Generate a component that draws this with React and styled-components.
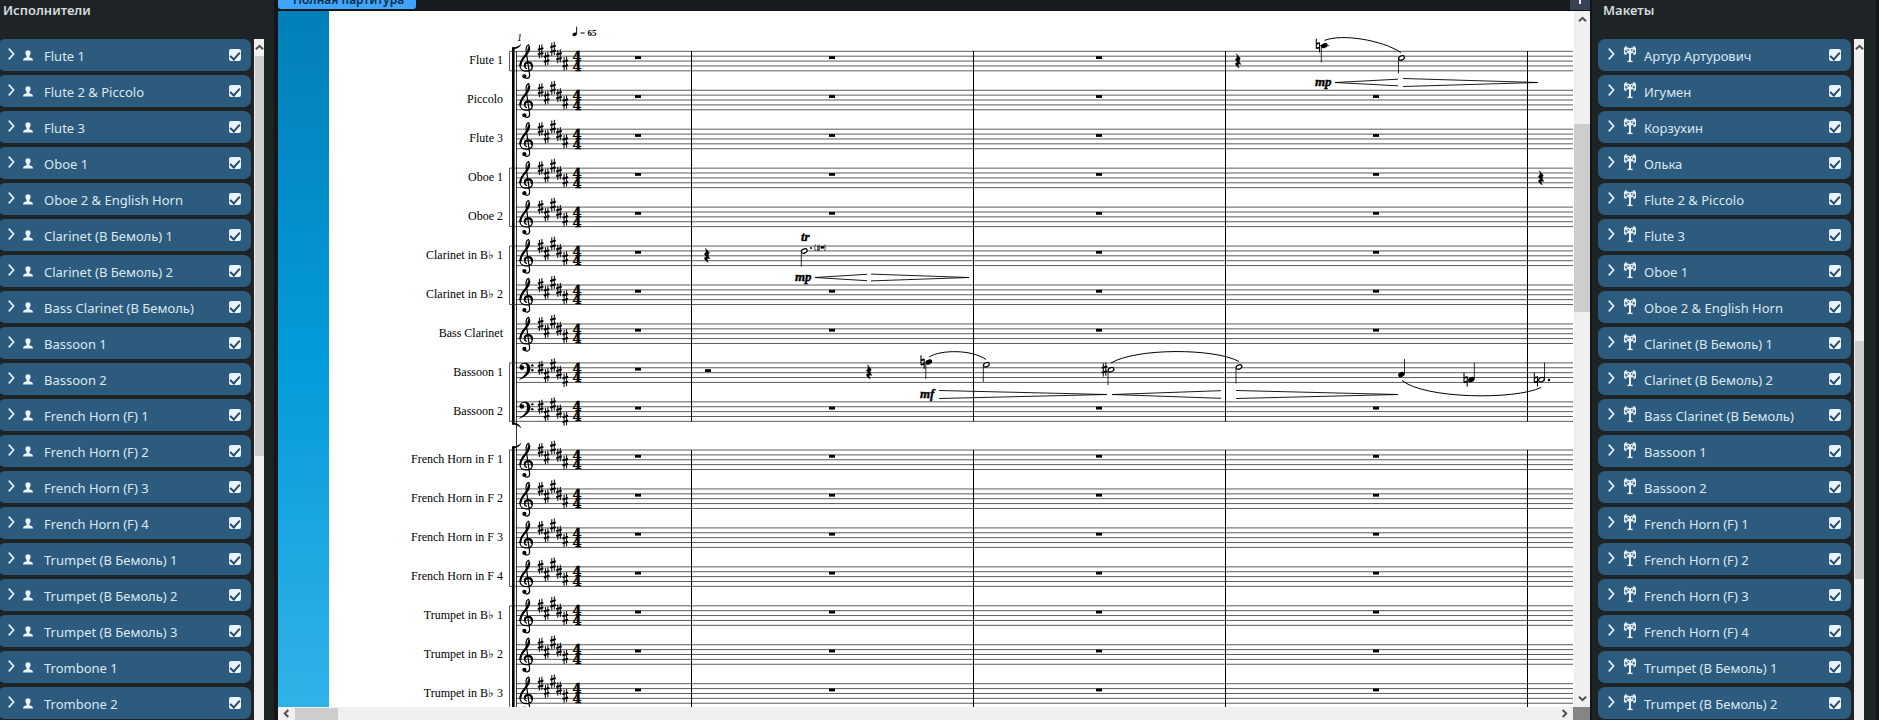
import React from 'react';
import styled, { createGlobalStyle } from 'styled-components';

const UI_FONT = '"Noto Sans", "Open Sans", sans-serif';
const SCORE_FONT = '"Liberation Serif", serif';

const Global = createGlobalStyle`
  * { box-sizing: border-box; }
  html, body { margin: 0; background: #1d2226; overflow: hidden; }
  body { font-family: ${UI_FONT}; font-size: 13px; }
`;

const Shell = styled.div`
  display: grid;
  grid-template-columns: 278px minmax(0, 1fr) 289px;
  height: 100vh;
  overflow: hidden;
`;

const Panel = styled.aside`
  display: flex;
  flex-direction: column;
  min-height: 0;
  height: 100vh;
  background: #1e2326;
  border-right: ${(p) => (p.$side === 'left' ? 4 : 3)}px solid #12161a;
  border-left: ${(p) => (p.$side === 'left' ? 0 : 2)}px solid #12161a;
`;

const PanelTitle = styled.h2`
  margin: 0;
  flex: none;
  height: 39px;
  padding-left: ${(p) => (p.$side === 'left' ? 3 : 11)}px;
  font-size: 13px;
  line-height: 20px;
  font-weight: 600;
  color: #d5dade;
`;

const PanelBody = styled.div`
  display: flex;
  flex: 1;
  min-height: 0;
  gap: 3px;
  padding-left: ${(p) => (p.$side === 'left' ? 0 : 6)}px;
`;

const List = styled.ul`
  list-style: none;
  margin: 0 0 0 ${(p) => (p.$side === 'left' ? -2 : 0)}px;
  padding: 0;
  width: 253px;
  display: flex;
  flex-direction: column;
  gap: 4px;
  overflow: hidden;
`;

const Row = styled.li`
  display: flex;
  align-items: center;
  flex: none;
  height: 32px;
  padding: 0 10px;
  border-radius: 7px;
  background: #2c5b7e;
`;

const Expander = styled.button`
  display: flex;
  padding: 0;
  border: 0;
  background: none;
  width: 15px;
  height: 14px;
`;

const IconBox = styled.span`
  display: flex;
  width: 21px;
  height: 18px;
  align-items: center;
`;

const RowLabel = styled.label`
  flex: 1;
  padding-top: 2px;
  line-height: 20px;
  color: #dbe7f0;
  white-space: nowrap;
`;

const Check = styled.input`
  appearance: none;
  display: flex;
  justify-content: center;
  margin: 0;
  width: 12px;
  height: 12px;
  border-radius: 2px;
  background: #eaf3fa;
  &:checked::after {
    content: '';
    width: 4px;
    height: 8px;
    margin-top: 1px;
    border: solid #234b69;
    border-width: 0 2px 2px 0;
    transform: rotate(42deg);
  }
`;

const Track = styled.div`
  display: flex;
  flex-direction: column;
  align-items: center;
  width: 10px;
  overflow: hidden;
  background: #f0f0f0;
`;

const TrackArrow = styled.span`
  display: flex;
  flex: none;
  align-items: center;
  justify-content: center;
  width: ${(p) => p.$w}px;
  height: ${(p) => p.$h}px;
`;

const PanelThumb = styled.div`
  flex: none;
  align-self: flex-end;
  width: 9px;
  margin-top: ${(p) => p.$offset}px;
  height: ${(p) => p.$length}px;
  background: #cdcdcd;
`;

const Center = styled.main`
  display: flex;
  flex-direction: column;
  min-width: 0;
  height: 100vh;
`;

const TabBar = styled.div`
  display: flex;
  flex: none;
  align-items: flex-end;
  justify-content: space-between;
  height: 11px;
  overflow: hidden;
  background: #171c20;
  border-bottom: 1px solid #0e1014;
`;

const Tab = styled.button`
  height: 24px;
  margin-bottom: 1px;
  padding: 5px 12px 0 15px;
  border: 0;
  border-radius: 3px;
  background: #3fa5fb;
  color: #0d2c48;
  font: 600 12px/18px ${UI_FONT};
  white-space: nowrap;
`;

const AddTab = styled.button`
  display: flex;
  align-items: flex-end;
  justify-content: center;
  width: 20px;
  height: 20px;
  padding: 0 0 6px;
  border: 0;
  background: #3a4354;
`;

const Viewport = styled.div`
  display: flex;
  flex: 1;
  min-height: 0;
`;

const Desk = styled.div`
  width: 51px;
  background: linear-gradient(#027fb8, #049bdb 50%, #30b2e7);
`;

const Paper = styled.div`
  display: flex;
  flex: 1;
  min-width: 0;
  overflow: hidden;
  background: #fff;
`;

const StaffNames = styled.div`
  flex: none;
  width: 174px;
  padding-top: 30px;
  display: flex;
  flex-direction: column;
  gap: 9px;
`;

const StaffFamily = styled.div`
  text-align: right;
  font: 12px/39px ${SCORE_FONT};
  color: #000;
`;

const StaffName = styled.div`
  height: 39px;
  white-space: nowrap;
`;

const ScoreSvg = styled.svg`
  flex: 1;
  min-width: 0;
  height: 100%;
  margin-left: 5px;
  overflow: hidden;
`;

const VScroll = styled.div`
  display: flex;
  flex-direction: column;
  flex: none;
  width: 17px;
  background: #f0f0f0;
  border-left: 1px solid #fff;
`;

const VThumb = styled.div`
  margin-top: 96px;
  height: 188px;
  background: #cdcdcd;
`;

const Spacer = styled.div`
  flex: 1;
`;

const HScroll = styled.div`
  display: flex;
  flex: none;
  height: 13px;
  background: #f0f0f0;
`;

const HThumb = styled.div`
  width: 43px;
  margin-top: 1px;
  background: #cdcdcd;
`;

const Corner = styled.div`
  width: 17px;
  background: #858585;
`;

const players = [
  'Flute 1', 'Flute 2 & Piccolo', 'Flute 3', 'Oboe 1', 'Oboe 2 & English Horn',
  'Clarinet (В Бемоль) 1', 'Clarinet (В Бемоль) 2', 'Bass Clarinet (В Бемоль)',
  'Bassoon 1', 'Bassoon 2', 'French Horn (F) 1', 'French Horn (F) 2',
  'French Horn (F) 3', 'French Horn (F) 4', 'Trumpet (В Бемоль) 1',
  'Trumpet (В Бемоль) 2', 'Trumpet (В Бемоль) 3', 'Trombone 1', 'Trombone 2',
];

const layouts = [
  'Артур Артурович', 'Игумен', 'Корзухин', 'Олька', 'Flute 2 & Piccolo', 'Flute 3',
  'Oboe 1', 'Oboe 2 & English Horn', 'Clarinet (В Бемоль) 1', 'Clarinet (В Бемоль) 2',
  'Bass Clarinet (В Бемоль)', 'Bassoon 1', 'Bassoon 2', 'French Horn (F) 1',
  'French Horn (F) 2', 'French Horn (F) 3', 'French Horn (F) 4',
  'Trumpet (В Бемоль) 1', 'Trumpet (В Бемоль) 2',
];

const woodwinds = [
  'Flute 1', 'Piccolo', 'Flute 3', 'Oboe 1', 'Oboe 2', 'Clarinet in B♭ 1',
  'Clarinet in B♭ 2', 'Bass Clarinet', 'Bassoon 1', 'Bassoon 2',
];

const brass = [
  'French Horn in F 1', 'French Horn in F 2', 'French Horn in F 3', 'French Horn in F 4',
  'Trumpet in B♭ 1', 'Trumpet in B♭ 2', 'Trumpet in B♭ 3',
];

const ChevronRight = () => (
  <svg width="7" height="12" viewBox="0 0 7 12" fill="none" stroke="#e6f0f7" strokeWidth="1.7">
    <path d="M0.7 0.7 L5.6 6 L0.7 11.3" />
  </svg>
);

const PersonIcon = () => (
  <svg width="10" height="11" viewBox="0 0 10 11" fill="#e9f2f9">
    <path d="M5 0.2 C6.8 0.2 7.7 1.4 7.6 3 C7.5 4.6 6.8 5.4 6.4 6 L6.4 7.2 C8.6 7.8 10 8.2 10 10.6 L0 10.6 C0 8.2 1.4 7.8 3.6 7.2 L3.6 6 C3.2 5.4 2.5 4.6 2.4 3 C2.3 1.4 3.2 0.2 5 0.2Z" />
  </svg>
);

const StandIcon = () => (
  <svg width="13" height="18" viewBox="-1 0 13 18" fill="none" stroke="#e4eff7" strokeWidth="1.3">
    <path d="M2.6 0.2 L0.6 2.2 V7.6 L2.4 8.6 M9.4 0.2 L11.4 2.2 V7.6 L9.6 8.6 M0.8 3.4 C2.5 2 4.5 2 6 3.2 C7.5 2 9.5 2 11.2 3.4 M0.8 7.6 C3 6.2 4.8 6.4 6 7.6 C7.2 6.4 9 6.2 11.2 7.6 M2.2 3.2 L6 7.2 L9.8 3.2" />
    <path d="M6 3 V15.4" strokeWidth="2" />
    <path d="M3.4 15.4 H8.6" strokeWidth="1.4" />
  </svg>
);

const turns = { up: 0, right: 90, down: 180, left: 270 };
const ArrowGlyph = ({ dir }) => (
  <svg width="9" height="9" viewBox="-4.5 -4.5 9 9" fill="none" stroke="#505050" strokeWidth="2">
    <path d="M-3.5 1.8 L0 -1.7 L3.5 1.8" transform={`rotate(${turns[dir]})`} />
  </svg>
);

function SidePanel({ side, title, items, icon: Icon, offset, length }) {
  return (
    <Panel $side={side}>
      <PanelTitle $side={side}>{title}</PanelTitle>
      <PanelBody $side={side}>
        <List $side={side}>
          {items.map((name, i) => (
            <Row key={name}>
              <Expander type="button" aria-label={`Expand ${name}`}><ChevronRight /></Expander>
              <IconBox><Icon /></IconBox>
              <RowLabel htmlFor={`${side}-${i}`}>{name}</RowLabel>
              <Check type="checkbox" id={`${side}-${i}`} defaultChecked />
            </Row>
          ))}
        </List>
        <Track>
          <TrackArrow $w={10} $h={17}><ArrowGlyph dir="up" /></TrackArrow>
          <PanelThumb $offset={offset} $length={length} />
        </Track>
      </PanelBody>
    </Panel>
  );
}

/* Score geometry */
const SPACE = 4.88;
const staffTop = (i) => (i < 10 ? 51.3 + 38.95 * i : 450 + 38.95 * (i - 10));
const isBass = (i) => i === 8 || i === 9;
const BARLINES = [691.5, 973.5, 1225.5, 1527.5];
const REST_X = [638, 832, 1099, 1376];
const SHARPS = [[540.6, 0], [546.6, 7.3], [553, -2.4], [559, 4.9], [565.3, 12.2]];
const skipsRest = (staff, bar) =>
  (staff === 0 && bar === 3) || (staff === 5 && bar === 1) || (staff === 8 && bar > 0);

const TrebleClef = ({ x, y }) => (
  <g transform={`translate(${x} ${y})`} fill="none" stroke="#000" strokeLinecap="round">
    <path strokeWidth="1.2" d="M5 24.8 C6 28.3 11 28 10.6 23.2 L7.3 1 C6.7 -3 7.8 -6 9.6 -6.6 C11.2 -4 10.6 0 7.5 3.5 C4 7.5 1 10 1 14.5 C1 18 4 19.9 7.5 19.9 C11 19.9 13.4 18 13.4 15 C13.4 12 11.5 10.8 9.5 10.8 C7 10.8 5.4 12.5 5.4 14.3 C5.4 16 6.5 17 7.6 17.3" />
    <path strokeWidth="2.1" d="M9.9 -3.6 C9.8 -1 8.8 1.4 6.6 4 C3.6 7.4 1.6 10.2 1.5 14" />
    <path strokeWidth="2" d="M5.8 14.6 C5.8 12.6 7.4 11.3 9.5 11.3 C11.4 11.3 12.8 12.8 12.8 15" />
    <circle cx="5.4" cy="25" r="2.1" fill="#000" stroke="none" />
  </g>
);

const BassClef = ({ x, y }) => (
  <g transform={`translate(${x} ${y})`}>
    <path d="M0.6 4.6 C0.6 1 3.6 -0.2 6 -0.2 C9.6 -0.2 11.4 2.4 11.4 5.5 C11.4 10.8 6 14.8 0.4 16.8 L0.2 16.3 C5.2 13.2 8 10.2 8 5.4 C8 2 7 0.8 5.2 0.8 C3.4 0.8 2 1.8 1.8 3.2 Z" />
    <circle cx="2.9" cy="4.7" r="2.3" />
    <circle cx="13.3" cy="2.5" r="1.2" />
    <circle cx="13.3" cy="7.4" r="1.2" />
  </g>
);

const Sharp = ({ x, y, s = 1 }) => (
  <g transform={`translate(${x} ${y}) scale(${s})`} stroke="#000" fill="none">
    <path strokeWidth="1" d="M-1.2 -6.3 V7 M1.3 -7 V6.3" />
    <path strokeWidth="1.9" d="M-2.8 -1.6 L2.8 -3.2 M-2.8 3.2 L2.8 1.6" />
  </g>
);

const Natural = ({ x, y }) => (
  <g transform={`translate(${x} ${y})`} stroke="#000" fill="none">
    <path strokeWidth="1.1" d="M-1.5 -6.8 V3 M1.7 -3 V6.8" />
    <path strokeWidth="1.8" d="M-1.5 -1.7 L1.7 -2.6 M-1.5 2.8 L1.7 1.9" />
  </g>
);

const QuarterRest = ({ x, y }) => (
  <path
    transform={`translate(${x} ${y})`}
    stroke="#000"
    strokeWidth="0.5"
    d="M-1.6 -7.2 L2.3 -2.6 C0.7 -0.6 0.9 1 3 3.4 C0.2 2.4 -0.6 3.8 1.2 6.8 C-3.4 4.6 -3.4 0.9 -0.2 1.6 L-2.7 -1.4 C-0.5 -3.2 -0.5 -5 -1.6 -7.2Z"
  />
);

const Note = ({ x, y, half, stem, ledger }) => (
  <g>
    {ledger && <path d={`M${x - 5} ${y} H${x + 5}`} stroke="#000" strokeWidth="0.8" />}
    <ellipse
      cx={x} cy={y} rx={half ? 3 : 3.5} ry={half ? 2 : 2.4}
      transform={`rotate(-24 ${x} ${y})`}
      fill={half ? '#fff' : '#000'} stroke={half ? '#000' : 'none'} strokeWidth="1.2"
    />
    <path
      d={stem > 0 ? `M${x - 3} ${y + 1} V${y + stem}` : `M${x + 3} ${y - 1} V${y + stem}`}
      stroke="#000" strokeWidth="0.8"
    />
  </g>
);

const Hairpin = ({ from, to, y, open = 3.8, closed = 0 }) => (
  <path
    d={`M${from} ${y - closed} L${to} ${y - open} M${from} ${y + closed} L${to} ${y + open}`}
    stroke="#000" strokeWidth="0.9" fill="none"
  />
);

const Slur = ({ d }) => <path d={d} stroke="#000" strokeWidth="1" fill="none" />;

const Dynamic = ({ x, y, children }) => (
  <text x={x} y={y} fontFamily={SCORE_FONT} fontSize="13" fontWeight="700" fontStyle="italic" stroke="#000" strokeWidth="0.4">{children}</text>
);

const Staff = ({ index }) => {
  const y = staffTop(index);
  const bass = isBass(index);
  return (
    <g>
      {[0, 1, 2, 3, 4].map((n) => (
        <path key={n} d={`M516 ${y + n * SPACE} H4000`} stroke="#333" strokeWidth="0.8" />
      ))}
      {bass ? <BassClef x={519} y={y} /> : <TrebleClef x={519} y={y} />}
      {SHARPS.map(([x, dy]) => <Sharp key={x} x={x} y={y + dy + (bass ? SPACE : 0)} />)}
      <text
        textAnchor="middle" fontFamily='"DejaVu Serif", serif' fontWeight="700" fontSize="13"
        stroke="#000" strokeWidth="0.4"
      >
        <tspan x="577" y={y + 9.6}>4</tspan>
        <tspan x="577" y={y + 19.4}>4</tspan>
      </text>
      {REST_X.map((x, bar) => (skipsRest(index, bar) ? null : (
        <rect key={x} x={x - 3} y={y + SPACE} width="6" height="2.8" />
      )))}
    </g>
  );
};

const SubBracket = ({ first, last }) => (
  <path
    d={`M516 ${staffTop(first)} H509.5 V${staffTop(last) + SPACE * 4} H516`}
    stroke="#333" strokeWidth="0.8" fill="none"
  />
);

const FamilyBracket = ({ top, bottom }) => (
  <g>
    <rect x="512" y={top} width="2.6" height={bottom - top} />
    <path d={`M512 ${top} C516 ${top} 519 ${top - 1.2} 521.4 ${top - 4} C520 ${top + 0.4} 516.5 ${top + 1.6} 512 ${top + 2}Z`} />
    <path d={`M512 ${bottom} C516 ${bottom} 519 ${bottom + 1.2} 521.4 ${bottom + 4} C520 ${bottom - 0.4} 516.5 ${bottom - 1.6} 512 ${bottom - 2}Z`} />
  </g>
);

function Score() {
  const windEnd = staffTop(9) + 4 * SPACE;
  return (
    <ScoreSvg role="img" aria-label="Score">
      <g transform="translate(-508 -11)">
        {[...woodwinds, ...brass].map((name, i) => <Staff key={name} index={i} />)}
        <path d="M516.5 51 V900" stroke="#000" strokeWidth="0.8" />
        {BARLINES.map((x) => (
          <path key={x} d={`M${x} 51 V${windEnd} M${x} 450 V900`} stroke="#000" strokeWidth="1" />
        ))}
        <FamilyBracket top={47.4} bottom={424.4} />
        <FamilyBracket top={446.4} bottom={900} />
        <SubBracket first={0} last={0} />
        <SubBracket first={3} last={4} />
        <SubBracket first={5} last={6} />
        <SubBracket first={8} last={9} />
        <SubBracket first={10} last={13} />
        <SubBracket first={14} last={17} />

        <text x="517" y="41" fontFamily={SCORE_FONT} fontStyle="italic" fontSize="10">1</text>
        <ellipse cx="574.6" cy="34.3" rx="2.3" ry="1.7" transform="rotate(-20 574.6 34.3)" />
        <path d="M576.6 34 V26.5" stroke="#000" strokeWidth="0.9" />
        <text x="580" y="36" fontFamily={SCORE_FONT} fontWeight="700" fontSize="9">= 65</text>

        <QuarterRest x={1238} y={61} />
        <Natural x={1317.8} y={45.6} />
        <Note x={1324.3} y={45.6} stem={17} ledger />
        <Note x={1401.5} y={58} half stem={15.5} />
        <Slur d="M1324.5 40.4 C1342 33.5 1382 40 1401 52.6" />
        <Dynamic x={1315} y={85.5}>mp</Dynamic>
        <Hairpin from={1335} to={1398} y={82.5} open={3.3} />
        <Hairpin from={1538} to={1403} y={82.5} open={4} />

        <QuarterRest x={1541} y={178} />

        <QuarterRest x={707} y={255.4} />
        <Dynamic x={801} y={240.5}>tr</Dynamic>
        <Note x={804.3} y={251} half stem={15.5} />
        <circle cx="811" cy="248" r="1" />
        <Sharp x={818.5} y={248} s={0.5} />
        <ellipse cx="822.4" cy="247.4" rx="2" ry="1.4" />
        <path d="M815.4 244.6 Q813.8 247.8 815.4 251 M824.6 244.6 Q826.2 247.8 824.6 251" fill="none" stroke="#000" strokeWidth="0.7" />
        <Dynamic x={795} y={280.5}>mp</Dynamic>
        <Hairpin from={815} to={867} y={277.5} open={3.2} />
        <Hairpin from={969} to={871} y={277.5} open={3.4} />

        <rect x="705" y="369.2" width="6" height="2.8" />
        <QuarterRest x={869} y={372} />
        <Natural x={922.5} y={362} />
        <Note x={928.8} y={362} stem={17} />
        <Note x={986.3} y={364.8} half stem={17} />
        <Slur d="M929 357 C941 349.5 972 349.5 986 359.5" />
        <Dynamic x={920} y={398}>mf</Dynamic>
        <Hairpin from={1107} to={939} y={394.5} open={4} />
        <Sharp x={1104.5} y={369.5} />
        <Note x={1111} y={369.7} half stem={15.5} />
        <Slur d="M1111 363 C1136 348 1214 348 1239 361.5" />
        <Hairpin from={1112} to={1221} y={394.5} open={3.8} />
        <Note x={1239} y={367} half stem={16.5} />
        <Hairpin from={1398} to={1236} y={394.5} open={4} />
        <Note x={1401.5} y={374.5} stem={-15.5} />
        <Natural x={1465.5} y={379.6} />
        <Note x={1471.3} y={379.6} stem={-17} />
        <Natural x={1535.8} y={379.6} />
        <Note x={1541.5} y={379.6} half stem={-17} />
        <circle cx="1549" cy="380" r="1.2" />
        <Slur d="M1402 380.5 C1425 399 1515 400 1541 387.5" />
      </g>
    </ScoreSvg>
  );
}

export default function App() {
  return (
    <Shell>
      <Global />
      <SidePanel side="left" title="Исполнители" items={players} icon={PersonIcon} offset={0} length={400} />
      <Center>
        <TabBar>
          <Tab type="button">Полная партитура</Tab>
          <AddTab type="button" aria-label="+">
            <svg width="10" height="10" viewBox="0 0 10 10" stroke="#e8ecf2" strokeWidth="2">
              <path d="M5 0 V10 M0 5 H10" />
            </svg>
          </AddTab>
        </TabBar>
        <Viewport>
          <Desk />
          <Paper>
            <StaffNames>
              {[woodwinds, brass].map((family) => (
                <StaffFamily key={family[0]}>
                  {family.map((name) => <StaffName key={name}>{name}</StaffName>)}
                </StaffFamily>
              ))}
            </StaffNames>
            <Score />
          </Paper>
          <VScroll>
            <TrackArrow $w={16} $h={17}><ArrowGlyph dir="up" /></TrackArrow>
            <VThumb />
            <Spacer />
            <TrackArrow $w={16} $h={17}><ArrowGlyph dir="down" /></TrackArrow>
          </VScroll>
        </Viewport>
        <HScroll>
          <TrackArrow $w={17} $h={13}><ArrowGlyph dir="left" /></TrackArrow>
          <HThumb />
          <Spacer />
          <TrackArrow $w={17} $h={13}><ArrowGlyph dir="right" /></TrackArrow>
          <Corner />
        </HScroll>
      </Center>
      <SidePanel side="right" title="Макеты" items={layouts} icon={StandIcon} offset={285} length={238} />
    </Shell>
  );
}
